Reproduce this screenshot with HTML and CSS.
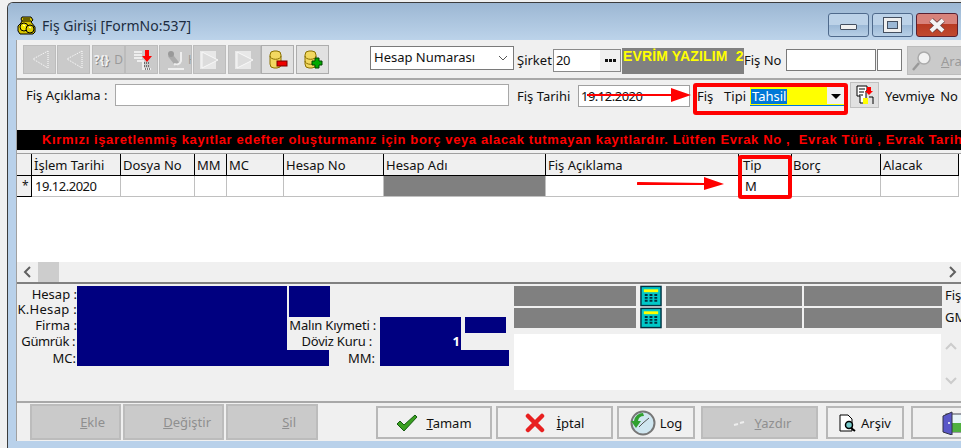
FILE: index.html
```html
<!DOCTYPE html>
<html lang="tr">
<head>
<meta charset="utf-8">
<title>Fiş Girişi</title>
<link rel="stylesheet" href="styles.css">
</head>
<body>
<div class="window">
  <header class="titlebar">
    <svg class="app-icon" width="20" height="19" viewBox="0 0 20 19"><path d="M5 1h9l2 3-2 2 4 5v5l-2 2H3l-2-3v-5l3-3 1-2-1-2z" fill="#d8c400" stroke="#000"/><circle cx="7" cy="11" r="4" fill="#f4e800" stroke="#000"/><circle cx="13" cy="13" r="4" fill="#e0d000" stroke="#000"/><path d="M6 3h7M5 5h9" stroke="#000"/><path d="M6 9l2 1M12 11l2 1" stroke="#fff"/></svg>
    <span class="title-text">Fiş Girişi [FormNo:537]</span>
    <div class="caption-buttons">
      <div class="cap cap-min"><i></i></div>
      <div class="cap cap-max"><i></i></div>
      <div class="cap cap-close"><svg width="20" height="15" viewBox="0 0 20 15"><path d="M4 2l12 11M16 2L4 13" stroke="#6a4040" stroke-width="5.5"/><path d="M4 2l12 11M16 2L4 13" stroke="#f4f4f4" stroke-width="4"/></svg></div>
    </div>
  </header>

  <main class="client">
    <section class="toolbar">
      <div class="tools">
        <button class="tool off"><svg width="20" height="20" viewBox="0 0 20 20"><path d="M18 1v17L3 9z" fill="none" stroke="#fff" stroke-dasharray="1 1"/></svg></button>
        <button class="tool off"><svg width="20" height="20" viewBox="0 0 20 20"><path d="M18 1v17L3 9z" fill="none" stroke="#fff" stroke-dasharray="1 1"/></svg></button>
        <button class="tool off t-gap"><span class="tool-glyph">?{}</span><span class="tool-tail">D</span></button>
        <button class="tool off"><svg width="20" height="22" viewBox="0 0 20 22"><path d="M2 3h8M2 6h8M2 9h8M5 12h6v8h8" fill="none" stroke="#eee" stroke-width="2"/><path d="M12 14h6M12 17h6M13 20h5" stroke="#111" stroke-dasharray="1 1"/><path d="M13 1v6h-3l5 6 5-6h-3V1z" fill="#f00"/></svg></button>
        <button class="tool off"><svg width="20" height="22" viewBox="0 0 20 22"><path d="M4 6l8 10" stroke="#aaa" stroke-width="5"/><path d="M15 3v9a5 5 0 0 1-7 3M2 20h16" fill="none" stroke="#eee" stroke-width="2"/><circle cx="5" cy="5" r="3" fill="#999"/></svg><span class="tool-tail tail-h">H</span></button>
        <button class="tool off t-gap"><svg width="22" height="22" viewBox="0 0 22 22"><rect x="1" y="2" width="16" height="18" fill="#e8e8e8"/><path d="M3 3v16l16-8z" fill="#dcdcdc" stroke="#f8f8f8"/></svg></button>
        <button class="tool off t-gap"><svg width="22" height="22" viewBox="0 0 22 22"><rect x="1" y="2" width="16" height="18" fill="#e8e8e8"/><path d="M3 3v16l16-8z" fill="#dcdcdc" stroke="#f8f8f8"/></svg></button>
        <button class="tool"><svg width="20" height="20" viewBox="0 0 20 20"><rect x="2" y="1" width="11" height="17" rx="4" fill="#f2d860" stroke="#8a7000"/><path d="M2 6a5 3 0 0 0 11 0" fill="none" stroke="#8a7000"/><rect x="9" y="11" width="10" height="5" fill="#e00" stroke="#700"/></svg></button>
        <button class="tool t-gap"><svg width="20" height="20" viewBox="0 0 20 20"><rect x="2" y="1" width="11" height="17" rx="4" fill="#f2d860" stroke="#8a7000"/><path d="M2 6a5 3 0 0 0 11 0M2 11a5 3 0 0 0 11 0" fill="none" stroke="#8a7000"/><path d="M12 8h4v3h3v4h-3v3h-4v-3H9v-4h3z" fill="#0a0" stroke="#040"/></svg></button>
      </div>
      <div class="select"><span class="select-text">Hesap Numarası</span><svg width="10" height="6" viewBox="0 0 10 6"><path d="M1 1l4 4 4-4" fill="none" stroke="#555"/></svg></div>
      <label class="lbl lbl-sirket">Şirket</label>
      <div class="lookup"><span class="lookup-val">20</span><b><svg width="11" height="3" viewBox="0 0 11 3"><path d="M0 0h3v3H0zM4 0h3v3H4zM8 0h3v3H8z" fill="#111"/></svg></b></div>
      <div class="brand">EVRİM YAZILIM&nbsp;&nbsp;2</div>
      <label class="lbl lbl-fisno">Fiş No</label>
      <div class="field f-fisno"></div>
      <div class="field f-fisno2"></div>
      <button class="ara"><svg width="22" height="22" viewBox="0 0 22 22"><circle cx="13" cy="8" r="6" fill="#f2f2f2" stroke="#aaa" stroke-width="1.5"/><path d="M8 13l-6 7" stroke="#999" stroke-width="2.5"/></svg><span><u>A</u>ra</span></button>
    </section>

    <section class="filter">
      <label class="lbl lbl-aciklama">Fiş Açıklama :</label>
      <div class="field f-aciklama"></div>
      <label class="lbl lbl-tarih">Fiş Tarihi</label>
      <div class="date">19.12.2020</div>
      <label class="lbl lbl-tipi">Fiş&nbsp; Tipi</label>
      <div class="combo"><span>Tahsil</span><i></i></div>
      <button class="mini"><svg width="18" height="20" viewBox="0 0 18 20"><path d="M1 1h10v5h-1v12H4v-7H1z" fill="#fff" stroke="#000"/><path d="M3 4h6M3 7h5M3 10h4" stroke="#000"/><rect x="7" y="13" width="5" height="6" fill="#ff0"/><path d="M11 2v4H9l4 4 4-4h-2V2z" fill="#f00"/><path d="M13 12h4v7" fill="none" stroke="#000"/></svg></button>
      <label class="lbl lbl-yevmiye">Yevmiye No</label>
    </section>

    <div class="notice">Kırmızı işaretlenmiş kayıtlar edefter oluşturmanız için borç veya alacak tutmayan kayıtlardır. Lütfen Evrak No ,&nbsp; Evrak Türü , Evrak Tarihi</div>

    <section class="grid">
      <div class="grid-head">
        <div class="h c0"></div><div class="h c1">İşlem Tarihi</div><div class="h c2">Dosya No</div><div class="h c3">MM</div><div class="h c4">MC</div><div class="h c5">Hesap No</div><div class="h c6">Hesap Adı</div><div class="h c7">Fiş Açıklama</div><div class="h c8">Tip</div><div class="h c9">Borç</div><div class="h c10">Alacak</div>
      </div>
      <div class="grid-row">
        <div class="h c0 star">*</div><div class="d c1">19.12.2020</div><div class="d c2"></div><div class="d c3"></div><div class="d c4"></div><div class="d c5"></div><div class="d c6 grey"></div><div class="d c7"></div><div class="d c8 tipm">M</div><div class="d c9"></div><div class="d c10"></div>
      </div>
      <div class="grid-empty"></div>
      <div class="hscroll">
        <svg width="12" height="12" viewBox="0 0 12 12"><path d="M8 1L3 6l5 5" fill="none" stroke="#606060" stroke-width="2"/></svg>
        <div class="thumb"></div>
        <svg class="hs-right" width="12" height="12" viewBox="0 0 12 12"><path d="M4 1l5 5-5 5" fill="none" stroke="#606060" stroke-width="2"/></svg>
      </div>
    </section>

    <section class="info">
      <div class="info-left">
        <div class="l l1">Hesap :</div><div class="l l2">K.Hesap :</div><div class="l l3">Firma :</div><div class="l l4">Gümrük :</div><div class="l l5">MC:</div>
        <div class="navy n1"></div><div class="navy n2"></div><div class="navy n3"></div>
        <div class="l l6">Malın Kıymeti :</div><div class="l l7">Döviz Kuru :</div><div class="l l8">MM:</div>
        <div class="navy n4">1</div><div class="navy n5"></div><div class="navy n6"></div>
      </div>
      <div class="info-right">
        <div class="amount-row">
          <div class="gbox g1"></div>
          <svg class="calc" width="22" height="22" viewBox="0 0 23 22"><rect x="1" y="1" width="21" height="20" fill="#00c8c8" stroke="#003040" stroke-width="1.5"/><rect x="4" y="4" width="15" height="3" fill="#ff0"/><path d="M5 10h3M10 10h3M15 10h3M5 13h3M10 13h3M15 13h3M5 16h3M10 16h3M15 16h3" stroke="#003040" stroke-width="2"/></svg>
          <div class="gbox g2"></div><div class="gbox g3"></div><span class="edge-lbl">Fiş</span>
        </div>
        <div class="amount-row">
          <div class="gbox g1"></div>
          <svg class="calc" width="22" height="22" viewBox="0 0 23 22"><rect x="1" y="1" width="21" height="20" fill="#00c8c8" stroke="#003040" stroke-width="1.5"/><rect x="4" y="4" width="15" height="3" fill="#ff0"/><path d="M5 10h3M10 10h3M15 10h3M5 13h3M10 13h3M15 13h3M5 16h3M10 16h3M15 16h3" stroke="#003040" stroke-width="2"/></svg>
          <div class="gbox g2"></div><div class="gbox g3"></div><span class="edge-lbl">GM</span>
        </div>
        <div class="memo-row">
          <div class="memo"></div>
          <div class="vscroll">
            <svg width="12" height="10" viewBox="0 0 12 10"><path d="M1 8l5-5 5 5" fill="none" stroke="#ccc" stroke-width="2"/></svg>
            <svg width="12" height="10" viewBox="0 0 12 10"><path d="M1 2l5 5 5-5" fill="none" stroke="#ccc" stroke-width="2"/></svg>
          </div>
        </div>
      </div>
    </section>

    <footer class="actions">
      <button class="act off b-ekle"><span><u>E</u>kle</span></button>
      <button class="act off b-degis"><span><u>D</u>eğiştir</span></button>
      <button class="act off b-sil"><span><u>S</u>il</span></button>
      <button class="act b-tamam"><svg width="22" height="18" viewBox="0 0 22 18"><path d="M1 10l3-3 4 4L19 1l2 2L8 17z" fill="#3aa020" stroke="#145a10"/></svg><span><u>T</u>amam</span></button>
      <button class="act b-iptal"><svg width="20" height="20" viewBox="0 0 20 20"><path d="M3 3l14 14M17 3L3 17" stroke="#e82020" stroke-width="4.5" stroke-linecap="round"/></svg><span><u>İ</u>ptal</span></button>
      <button class="act b-log"><svg width="26" height="26" viewBox="0 0 26 26"><circle cx="13" cy="13" r="11.5" fill="#cfe6f0" stroke="#777" stroke-width="2"/><path d="M13 13l6-5M13 13l-4 4" stroke="#555"/><path d="M13 3a9 9 0 0 0-9 8H1l5 7 5-7H8a6 6 0 0 1 6-5z" fill="#30a030"/></svg><span>Log</span></button>
      <button class="act off b-yazdir"><svg width="12" height="6" viewBox="0 0 12 6"><path d="M1 5l4-1M7 3l4-1" stroke="#eee" stroke-width="2"/></svg><span><u>Y</u>azdır</span></button>
      <button class="act b-arsiv"><svg width="18" height="18" viewBox="0 0 18 18"><path d="M1 1h8l4 4v12H1z" fill="#fff" stroke="#000"/><circle cx="10" cy="11" r="3.5" fill="#7cc" stroke="#000" stroke-width="1.5"/><path d="M12 14l4 3" stroke="#000" stroke-width="2"/></svg><span>Arşiv</span></button>
      <button class="act b-exit"><svg width="20" height="24" viewBox="0 0 20 24"><rect x="4" y="3" width="16" height="18" fill="#e8f4f8" stroke="#445"/><rect x="8" y="12" width="12" height="9" fill="#50b040"/><path d="M1 5l9-4v23l-9-3z" fill="#5a58c8" stroke="#334"/><circle cx="7" cy="12" r="1" fill="#fff"/></svg></button>
    </footer>
  </main>

  <div class="mark box-tipi"></div>
  <div class="mark box-tip"></div>
  <svg class="mark arrow-a" width="104" height="14" viewBox="0 0 104 14"><path d="M0 6h84V0l20 7-20 7V8H0z" fill="#f00"/></svg>
  <svg class="mark arrow-b" width="87" height="13" viewBox="0 0 87 13"><path d="M1 5l66 1V0l20 7-20 6V8L1 8a1.5 1.5 0 0 1 0-3z" fill="#f00"/></svg>
</div>
</body>
</html>
```
FILE: styles.css
```css
* { box-sizing: border-box; }
html, body { margin: 0; height: 100%; overflow: hidden; }
body {
  background: #f0f0f0;
  font-family: "Noto Sans", "Liberation Sans", Arial, sans-serif;
  font-size: 13px;
  color: #111;
}
button { font: inherit; color: inherit; margin: 0; padding: 0; }

.window {
  position: relative;
  width: 954px;
  height: 446px;
  margin: 2px 0 0 7px;
  padding: 0 0 7px 8px;
  background: #b9d1ea;
  border-top: 1px solid #3c3c3c;
  border-left: 1px solid #3c3c3c;
  border-top-left-radius: 6px;
  display: flex;
  flex-direction: column;
  overflow: hidden;
}

.titlebar {
  flex: 0 0 37px;
  margin-left: -8px;
  padding-left: 9px;
  display: flex;
  align-items: center;
  background: linear-gradient(#9cb7d3, #bcd3ea);
}
.app-icon { flex: none; margin-top: 8px; }
.title-text { margin: 7px 0 0 5px; font-size: 14px; color: #1c2c40; }
.caption-buttons { margin-left: auto; display: flex; gap: 3px; padding-right: 3px; align-self: flex-start; padding-top: 10px; }
.cap {
  width: 41px; height: 24px;
  border: 1px solid #4f6a8c;
  border-radius: 3px;
  display: flex; align-items: center; justify-content: center;
  background: linear-gradient(#bcd2e8 0 50%, #9bb8d6 50%, #b7cfe6);
}
.cap-close { width: 42px; background: linear-gradient(#d8827a 0 45%, #b83a22 45%, #c04a30); border-color: #5a2030; }
.cap-min i { width: 17px; height: 6px; background: #f0f0f0; border: 1px solid #444f60; border-radius: 1px; margin-top: 3px; }
.cap-max i { width: 17px; height: 14px; background: #9bb8d6; border: 3px solid #f0f0f0; box-shadow: 0 0 0 1px #444f60, inset 0 0 0 1px #444f60; }

.client {
  flex: 1;
  min-height: 0;
  background: #f0f0f0;
  border-left: 1px solid #a0a0a0;
  display: flex;
  flex-direction: column;
}

.toolbar {
  flex: 0 0 40px;
  display: flex;
  align-items: flex-start;
  border-bottom: 2px solid #a8a8a8;
  overflow: hidden;
}
.tools { flex: none; display: flex; margin: 5px 0 0 6px; width: 347px; }
.tool {
  flex: none;
  width: 33px; height: 29px;
  margin-right: 1px;
  background: #e1e1e1;
  border: 1px solid #adadad;
  display: flex; align-items: center; justify-content: center;
  overflow: hidden;
  padding: 0;
}
.tool.off { background: #cacaca; border-color: #bcbcbc; }
.t-gap { margin-left: 1px; }
.tool:nth-child(3) { margin-left: 1px; margin-right: 0; }
.tool:nth-child(5) { margin-right: 0; }
.tool:nth-child(8) { margin-right: 1px; margin-left: 0; }
.tool:nth-child(7) { margin-right: 0; }
.tool-glyph { color: #f2f2f2; font-weight: bold; font-size: 12px; text-shadow: 1px 1px 0 #888; }
.tool-tail { color: #9a9a9a; font-size: 12px; margin-left: 5px; }
.tail-h { margin-left: 2px; margin-right: -12px; }

.select {
  flex: none;
  width: 144px; height: 24px;
  margin-top: 6px;
  background: #fff;
  border: 1px solid #7a7a7a;
  padding: 0 0 0 3px;
  display: flex; align-items: center; justify-content: space-between;
}
.select-text { margin-bottom: 2px; }
.select svg { margin-right: 5px; }
.lbl { flex: none; white-space: nowrap; line-height: 18px; }
.lbl-sirket { margin: 11px 0 0 3px; width: 36px; }
.lookup {
  flex: none;
  width: 68px; height: 23px;
  margin: 9px 0 0 0;
  background: #fff;
  border: 1px solid #8a8a8a;
  display: flex; align-items: center; justify-content: space-between;
  padding-left: 2px;
}
.lookup-val { margin-bottom: 2px; letter-spacing: -.5px; }
.lookup b { width: 20px; height: 21px; background: #f0f0f0; display: flex; align-items: center; justify-content: center; }
.brand {
  flex: none;
  width: 122px; height: 26px;
  margin: 8px 0 0 1px;
  background: #808080;
  color: #ffff00;
  font-family: "Liberation Sans", Arial, sans-serif;
  font-weight: bold;
  font-size: 14px;
  letter-spacing: .15px;
  white-space: nowrap;
  overflow: hidden;
  padding: 0 0 0 1px;
}
.lbl-fisno { margin: 11px 0 0 0; width: 42px; }
.field { flex: none; background: #fff; border: 1px solid #7a7a7a; }
.f-fisno { width: 90px; height: 22px; margin-top: 9px; }
.f-fisno2 { width: 25px; height: 22px; margin: 9px 0 0 1px; }
.ara {
  flex: none;
  width: 60px; height: 29px;
  margin: 6px 0 0 5px;
  background: #cacaca;
  border: 1px solid #bcbcbc;
  color: #9a9a9a;
  display: flex; align-items: center; gap: 8px;
  padding-left: 3px;
}

.filter { flex: 0 0 50px; display: flex; align-items: flex-start; overflow: hidden; }
.lbl-aciklama { margin: 6px 0 0 9px; width: 89px; }
.f-aciklama { width: 394px; height: 22px; margin-top: 4px; border-color: #a8a8a8; }
.lbl-tarih { margin: 7px 0 0 8px; width: 61px; }
.date {
  flex: none;
  width: 112px; height: 22px;
  margin-top: 5px;
  background: #fff;
  border: 1px solid #a0a0a0;
  padding: 2px 0 0 2px;
  line-height: 16px;
  letter-spacing: -.5px;
}
.lbl-tipi { margin: 7px 0 0 7px; width: 53px; word-spacing: 2px; }
.combo {
  flex: none;
  width: 95px; height: 19px;
  margin-top: 7px;
  background: #ff0;
  border-bottom: 1px solid #0078d7;
  display: flex; align-items: center; justify-content: space-between;
  padding-left: 1px;
  position: relative;
}
.combo span { background: #0078d7; color: #fff; padding: 0 1px; line-height: 15px; }
.combo i { position: absolute; right: 0; top: 0; width: 18px; height: 17px; background: #f0f0f0; }
.combo i::after { content: ""; position: absolute; left: 4px; top: 7px; border: 5px solid transparent; border-top-color: #000; border-bottom: 0; }
.mini {
  flex: none;
  width: 29px; height: 26px;
  margin: 2px 0 0 5px;
  background: #e1e1e1;
  border: 1px solid #c0c0c0;
  display: flex; align-items: center; justify-content: center;
}
.lbl-yevmiye { margin: 7px 0 0 6px; word-spacing: 2px; }

.notice {
  flex: 0 0 20px;
  background: #000;
  color: #f00;
  font-family: "Liberation Sans", Arial, sans-serif;
  font-weight: bold;
  font-size: 13px;
  line-height: 20px;
  padding-left: 25px;
  white-space: nowrap;
  overflow: hidden;
  letter-spacing: .63px;
}

.grid {
  flex: 0 0 131px;
  margin-top: 3px;
  background: #fff;
  border-top: 1px solid #a0a0a0;
  border-bottom: 2px solid #808080;
  display: flex;
  flex-direction: column;
  overflow: hidden;
}
.grid-head, .grid-row {
  display: grid;
  grid-template-columns: 15px 89px 74px 32px 57px 100px 162px 193px 53px 89px 78px 40px;
  flex: none;
}
.grid-head { height: 22px; }
.grid-row { height: 21px; }
.h {
  background: #f0f0f0;
  border-right: 1px solid #000;
  border-bottom: 1px solid #000;
  padding: 2px 0 0 2px;
  white-space: nowrap;
  line-height: 18px;
}
.h.c8 { padding-left: 4px; }
.h.c9 { padding-left: 1px; }
.d {
  border-right: 1px solid #c0c0c0;
  border-bottom: 1px solid #c0c0c0;
  padding: 1px 0 0 3px;
  line-height: 18px;
  letter-spacing: -.5px;
}
.h.star { padding: 1px 0 0 5px; font-size: 12px; }
.grey { background: #808080; }
.tipm { padding-left: 6px; }
.grid-empty { flex: 1; }
.hscroll {
  flex: 0 0 20px;
  background: #f0f0f0;
  display: flex;
  align-items: center;
  padding-left: 5px;
}
.thumb { width: 21px; height: 20px; background: #cdcdcd; margin-left: 4px; }
.hs-right { margin-left: auto; margin-right: 3px; }

.info { flex: 1; min-height: 0; display: flex; border-bottom: 2px solid #a8a8a8; }
.info-left {
  flex: 0 0 497px;
  display: grid;
  grid-template-columns: 60px 210px 2px 41px 50px 81px 4px 41px 3px;
  grid-template-rows: 15px 16px 16px 17px 16px;
  margin-top: 2px;
  align-self: start;
  line-height: 14px;
}
.l { text-align: right; white-space: nowrap; padding-top: 1px; }
.l1 { grid-area: 1/1; }
.l2 { grid-area: 2/1; letter-spacing: .3px; }
.l3 { grid-area: 3/1; }
.l4 { grid-area: 4/1; padding-right: 2px; letter-spacing: -.4px; }
.l5 { grid-area: 5/1; padding-right: 1px; }
.navy { background: #000080; color: #fff; font-weight: bold; text-align: right; }
.n1 { grid-area: 1/2/5/3; }
.n2 { grid-area: 1/4/3/5; }
.n3 { grid-area: 5/2/6/5; margin-right: 1px; }
.l6 { grid-area: 3/3/4/6; padding-right: 4px; letter-spacing: -.2px; }
.l7 { grid-area: 4/3/5/6; padding-right: 8px; letter-spacing: -.2px; }
.l8 { grid-area: 5/4/6/6; padding-right: 5px; }
.n4 { grid-area: 3/6/5/7; padding: 17px 1px 0 0; line-height: 14px; }
.n5 { grid-area: 3/8/4/9; }
.n6 { grid-area: 5/6/6/10; }

.info-right { flex: 1; min-width: 0; padding: 2px 0 0 0; }
.amount-row { height: 20px; margin-bottom: 2px; display: flex; white-space: nowrap; }
.gbox { flex: none; height: 20px; background: #808080; }
.g1 { width: 122px; }
.calc { flex: none; margin: -1px 0 0 4px; }
.g2 { width: 136px; margin-left: 4px; }
.g3 { width: 138px; margin-left: 2px; }
.edge-lbl { margin-left: 3px; line-height: 18px; }
.memo-row { display: flex; margin-top: 6px; }
.memo { flex: 0 0 427px; height: 56px; background: #fff; }
.vscroll { flex: 0 0 20px; padding: 7px 0 0 3px; display: flex; flex-direction: column; gap: 25px; margin-left: 1px; }

.actions { flex: 0 0 38px; display: flex; align-items: flex-start; padding-left: 13px; overflow: hidden; }
.act {
  flex: none;
  height: 33px;
  margin-top: 3px;
  background: #f0f0f0;
  border: 2px solid #b8b8b8;
  display: flex; align-items: center; justify-content: center;
  gap: 8px;
}
.act.off { background: #cacaca; color: #8f8f8f; border-color: #bcbcbc; }
.b-ekle { width: 91px; height: 36px; margin: 1px 2px 0 0; justify-content: flex-end; padding-right: 14px; }
.b-degis { width: 101px; height: 36px; margin: 1px 2px 0 0; justify-content: flex-end; padding-right: 11px; }
.b-sil { width: 92px; height: 36px; margin: 1px 58px 0 0; justify-content: flex-end; padding-right: 20px; }
.b-tamam { width: 116px; margin-right: 4px; }
.b-iptal { width: 117px; margin-right: 4px; gap: 12px; }
.b-log { width: 78px; margin-right: 6px; gap: 4px; }
.b-yazdir { width: 117px; margin-right: 8px; gap: 10px; padding-left: 5px; }
.b-arsiv { width: 78px; margin-right: 7px; gap: 4px; }
.b-exit { width: 60px; justify-content: flex-start; padding-left: 29px; }

.mark { position: absolute; pointer-events: none; }
.box-tipi { left: 685px; top: 80px; width: 155px; height: 32px; border: 4px solid #f00; border-radius: 3px; }
.box-tip { left: 730px; top: 152px; width: 54px; height: 44px; border: 4px solid #f00; border-radius: 3px; }
.arrow-a { left: 579px; top: 85px; }
.arrow-b { left: 629px; top: 174px; }
```
